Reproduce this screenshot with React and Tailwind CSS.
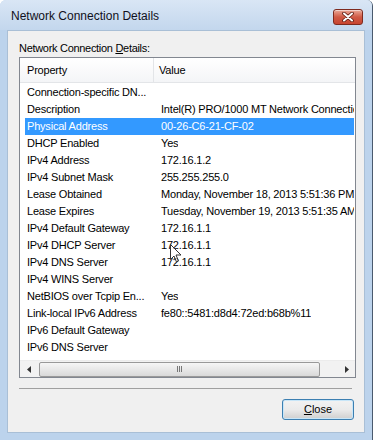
import React from "react";

const rows = [
  ["Connection-specific DN...", ""],
  ["Description", "Intel(R) PRO/1000 MT Network Connection"],
  ["Physical Address", "00-26-C6-21-CF-02"],
  ["DHCP Enabled", "Yes"],
  ["IPv4 Address", "172.16.1.2"],
  ["IPv4 Subnet Mask", "255.255.255.0"],
  ["Lease Obtained", "Monday, November 18, 2013 5:51:36 PM"],
  ["Lease Expires", "Tuesday, November 19, 2013 5:51:35 AM"],
  ["IPv4 Default Gateway", "172.16.1.1"],
  ["IPv4 DHCP Server", "172.16.1.1"],
  ["IPv4 DNS Server", "172.16.1.1"],
  ["IPv4 WINS Server", ""],
  ["NetBIOS over Tcpip En...", "Yes"],
  ["Link-local IPv6 Address", "fe80::5481:d8d4:72ed:b68b%11"],
  ["IPv6 Default Gateway", ""],
  ["IPv6 DNS Server", ""],
];

export default function App() {
  return (
    <div className="relative w-[373px] h-[440px] flex flex-col bg-[#bcd3ec] font-['Liberation_Sans',Arial,sans-serif] text-black overflow-hidden rounded-t-[6px] border-r border-[#4a5a6e]">
      {/* Title bar */}
      <div className="h-[30px] flex items-center justify-between pl-[11px] pr-[9px] bg-gradient-to-b from-[#d9e6f5] to-[#c3d7ed]">
        <span className="text-[12px] leading-none text-[#101020] mt-[1px]">Network Connection Details</span>
        <div className="w-[30px] h-[16px] mt-[3px] rounded-[3px] border border-[#7e2a1e] bg-gradient-to-b from-[#e9a898] via-[#d05a45] to-[#c74430] flex items-center justify-center shadow-[inset_0_1px_0_rgba(255,255,255,0.5)]">
          <svg width="12" height="10" viewBox="0 0 12 10">
            <path d="M2 1.5 L10 8.5 M10 1.5 L2 8.5" stroke="#5a1a10" strokeWidth="3.6" strokeLinecap="round" />
            <path d="M2 1.5 L10 8.5 M10 1.5 L2 8.5" stroke="#ffffff" strokeWidth="2" strokeLinecap="round" />
          </svg>
        </div>
      </div>

      {/* Client area */}
      <div className="flex-1 mx-[7px] mb-[7px] bg-[#f0f0f0] flex flex-col pl-[11px] pr-[8px] pt-[11px] border border-[#a9bfd6]">
        <div className="text-[11px] leading-[13px] h-[15px] tracking-[-0.3px]">
          Network Connection <span className="underline">D</span>etails:
        </div>

        {/* List box */}
        <div className="h-[321px] border border-[#828790] bg-white flex flex-col text-[11px] tracking-[-0.2px]">
          {/* Header */}
          <div className="h-[25px] flex bg-gradient-to-b from-white to-[#f4f5f7] border-b border-[#e3e5e8] shrink-0">
            <div className="w-[134px] flex items-center pl-[7px] border-r border-[#e3e5e8]">Property</div>
            <div className="flex-1 flex items-center pl-[5px]">Value</div>
          </div>
          {/* Rows */}
          <div className="mt-[1px] flex flex-col">
            {rows.map(([k, v], i) => (
              <div
                key={k}
                className={
                  i === 2
                    ? "h-[17px] ml-[5px] mr-[1px] flex items-center bg-[#3399ff] text-white whitespace-nowrap overflow-hidden"
                    : "h-[17px] ml-[5px] mr-[1px] flex items-center whitespace-nowrap overflow-hidden"
                }
              >
                <div className="w-[129px] pl-[2px] shrink-0 overflow-hidden">{k}</div>
                <div className="pl-[7px] overflow-hidden">{v}</div>
              </div>
            ))}
          </div>
          <div className="flex-1" />
          {/* Horizontal scrollbar */}
          <div className="h-[17px] flex items-center bg-[#f2f2f2] border-t border-[#ececec] tracking-normal">
            <div className="w-[17px] h-full flex items-center justify-center">
              <svg width="4" height="7" viewBox="0 0 4 7">
                <path d="M4 0 L0 3.5 L4 7 Z" fill="#333" />
              </svg>
            </div>
            <div className="w-[2px]" />
            <div className="w-[281px] h-[15px] rounded-[2px] border border-[#999] bg-gradient-to-b from-[#f6f6f6] via-[#e8e8e8] to-[#d9d9d9] flex items-center justify-center">
              <div className="flex gap-[1px]">
                <div className="w-[1px] h-[6px] bg-[#777]" />
                <div className="w-[1px] h-[6px] bg-[#777]" />
                <div className="w-[1px] h-[6px] bg-[#777]" />
              </div>
            </div>
            <div className="flex-1" />
            <div className="w-[17px] h-full flex items-center justify-center">
              <svg width="4" height="7" viewBox="0 0 4 7">
                <path d="M0 0 L4 3.5 L0 7 Z" fill="#333" />
              </svg>
            </div>
          </div>
        </div>

        {/* Separator */}
        <div className="mt-[10px] mr-[4px] h-[2px] border-t border-[#a0a0a0] border-b-white" />

        {/* Button row */}
        <div className="mt-[9px] flex justify-end pr-[2px]">
          <div className="w-[72px] h-[21px] rounded-[3px] border border-[#3c7fb1] shadow-[0_0_0_1px_#c8e6f8_inset] bg-gradient-to-b from-[#f2f2f2] via-[#ebebeb] to-[#cfcfcf] flex items-center justify-center text-[11px]">
            <span><span className="underline">C</span>lose</span>
          </div>
        </div>
      </div>

      {/* Mouse cursor */}
      <svg className="absolute left-[170px] top-[244px]" width="12" height="19" viewBox="0 0 12 19">
        <path d="M0.5 0.5 L0.5 15.5 L4 12 L6.5 18 L8.5 17 L6 11 L11 11 Z" fill="#ffffff" fillOpacity="0.6" stroke="#333" strokeWidth="1" />
      </svg>
    </div>
  );
}
